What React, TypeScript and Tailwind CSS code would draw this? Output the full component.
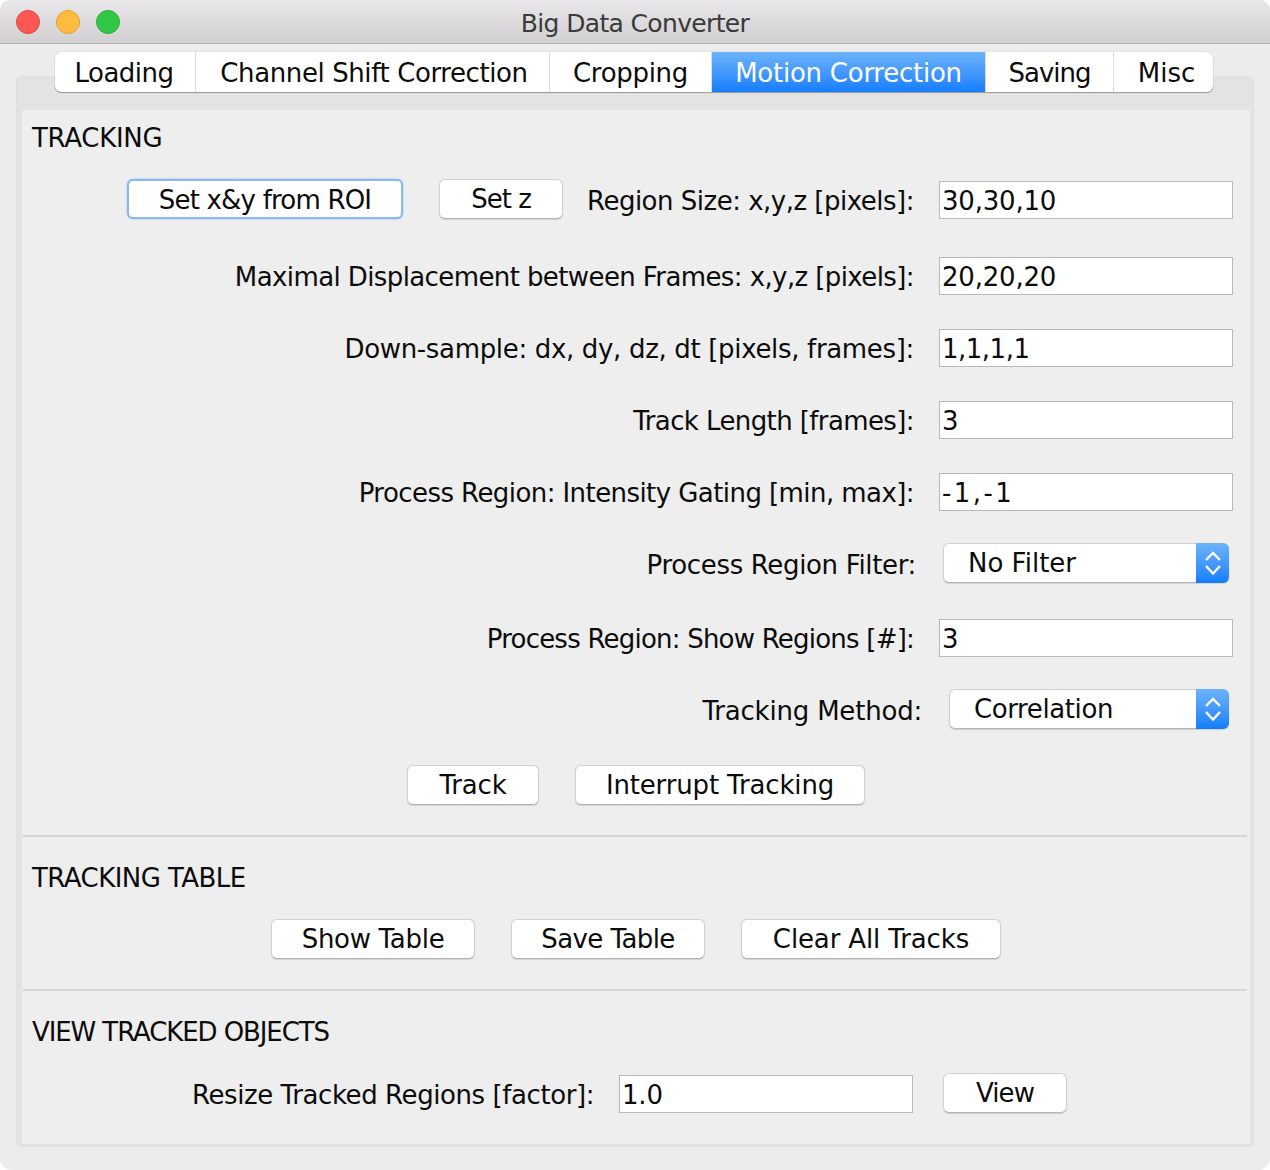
import { ReactNode } from "react";

const Btn = ({ w, label, focus, track = "" }: { w: string; label: string; focus?: boolean; track?: string }) => (
  <button
    className={`${w} ${track} h-[40px] shrink-0 rounded-[6px] bg-white text-center leading-[38px] ${
      focus
        ? "border-2 border-[#8ab8ee] shadow-[0_0_2px_#8ab8ee]"
        : "border border-[#d0d0d0] border-b-[#b4b4b4] shadow-[0_1px_1px_rgba(0,0,0,0.12)]"
    }`}
  >
    {label}
  </button>
);

const Field = ({ value, track = "" }: { value: string; track?: string }) => (
  <div className={`${track} h-[38px] w-[294px] shrink-0 self-end border border-[#b9b9b9] bg-white pl-[2px] leading-[38px]`}>
    {value}
  </div>
);

const Select = ({ w, value, track = "" }: { w: string; value: string; track?: string }) => (
  <div className={`${w} flex h-[40px] shrink-0 rounded-[6px] border border-[#d0d0d0] border-b-[#b4b4b4] bg-white shadow-[0_1px_1px_rgba(0,0,0,0.12)]`}>
    <div className={`${track} flex-1 pl-[24px] leading-[38px]`}>{value}</div>
    <div className="-my-px -mr-px flex w-[33px] items-center justify-center rounded-r-[6px] bg-gradient-to-b from-[#6cb3fa] to-[#0f7dfe]">
      <svg width="18" height="28" viewBox="0 0 18 28" fill="none" stroke="#fff" strokeWidth="2.4">
        <path d="M2 11 9 4 16 11" />
        <path d="M2 17 9 24.5 16 17" />
      </svg>
    </div>
  </div>
);

const Row = ({ mt, h, label, track, children, gap = "ml-[25px]", pr = "pr-[17px]", nudge = "pt-[2px]" }: {
  mt: string;
  h: string;
  label: string;
  track: string;
  children: ReactNode;
  gap?: string;
  pr?: string;
  nudge?: string;
}) => (
  <div className={`${mt} ${h} ${pr} flex items-center justify-end`}>
    <span className={`${track} ${nudge} whitespace-nowrap`}>{label}</span>
    <div className={`${gap} flex h-full items-center`}>{children}</div>
  </div>
);

const Heading = ({ mt = "", text, track }: { mt?: string; text: string; track: string }) => (
  <div className={`${mt} ${track} h-[54px] pl-[10px] leading-[56px]`}>{text}</div>
);

const Divider = () => <div className="mt-[30px] ml-px mr-[3px] h-[2px] bg-[#d6d6d6]" />;

const tabs = [
  { label: "Loading", cls: "w-[141px] rounded-l-[6px] pr-[2px] tracking-[-0.5px]" },
  { label: "Channel Shift Correction", cls: "w-[354px] pl-[3px] tracking-[-0.4px]" },
  { label: "Cropping", cls: "w-[162px] tracking-[-0.3px]" },
  { label: "Motion Correction", cls: "w-[274px] tracking-[-0.25px]", active: true },
  { label: "Saving", cls: "w-[128px] tracking-[-1px]" },
  { label: "Misc", cls: "w-[99px] rounded-r-[6px] pl-[6px] tracking-[0px]" },
];

export default function App() {
  return (
    <div className="h-[1170px] w-[1270px] overflow-hidden bg-white font-['DejaVu_Sans',sans-serif] text-[26px] tracking-[-0.2px] text-[#0c0c0c]">
      <div className="flex h-full flex-col rounded-[12px] bg-[#ececec]">
        <div className="relative flex h-[44px] items-center justify-center rounded-t-[10px] border-b border-[#b1b1b1] bg-gradient-to-b from-[#e9e7e9] to-[#d2d0d2] pt-[5px] text-[25px] tracking-[-0.65px] text-[#3a3a3a]">
          <div className="absolute top-[10px] left-[16px] flex gap-[16px]">
            <span className="h-[24px] w-[24px] rounded-full border border-[#e2463f] bg-[#fc5753]" />
            <span className="h-[24px] w-[24px] rounded-full border border-[#e1a029] bg-[#fdbc40]" />
            <span className="h-[24px] w-[24px] rounded-full border border-[#2aac3a] bg-[#33c748]" />
          </div>
          Big Data Converter
        </div>

        <div className="relative z-10 mt-[8px] ml-[55px] flex h-[40px] w-[1158px] divide-x divide-[#dcdcdc] rounded-[6px] bg-white shadow-[0_0_1px_rgba(0,0,0,0.35),0_1px_1px_rgba(0,0,0,0.3)]">
          {tabs.map((t) => (
            <div
              key={t.label}
              className={`${t.cls} h-full text-center leading-[43px] ${
                t.active ? "bg-gradient-to-b from-[#6cb3fa] to-[#0f7dfe] text-white" : ""
              }`}
            >
              {t.label}
            </div>
          ))}
        </div>

        <div className="mx-[16px] -mt-[16px] h-[1071px] rounded-[6px] border border-[#dfdfdf] bg-[#e3e3e3] pt-[33px] pr-[3px] pb-[2px] pl-[5px]">
          <div className="h-full bg-[#eeeeee]">
            <Heading text="TRACKING" track="tracking-[-0.3px]" />

            <div className="mt-[15px] flex h-[40px] items-center pr-[17px] pl-[105px]">
              <Btn w="w-[276px]" label="Set x&y from ROI" focus track="tracking-[-0.8px]" />
              <div className="ml-[36px]">
                <Btn w="w-[124px]" label="Set z" track="tracking-[-1px]" />
              </div>
              <span className="ml-auto pt-[4px] tracking-[-0.5px] whitespace-nowrap">Region Size: x,y,z [pixels]:</span>
              <div className="ml-[25px] flex h-full">
                <Field value="30,30,10" />
              </div>
            </div>

            <Row mt="mt-[38px]" h="h-[38px]" label="Maximal Displacement between Frames: x,y,z [pixels]:" track="tracking-[-0.6px]">
              <Field value="20,20,20" />
            </Row>
            <Row mt="mt-[34px]" h="h-[38px]" label="Down-sample: dx, dy, dz, dt [pixels, frames]:" track="tracking-[-0.33px]">
              <Field value="1,1,1,1" track="tracking-[-0.5px]" />
            </Row>
            <Row mt="mt-[34px]" h="h-[38px]" label="Track Length [frames]:" track="tracking-[-0.6px]">
              <Field value="3" />
            </Row>
            <Row mt="mt-[34px]" h="h-[38px]" label="Process Region: Intensity Gating [min, max]:" track="tracking-[-0.57px]">
              <Field value="-1,-1" track="tracking-[2.4px]" />
            </Row>
            <Row mt="mt-[32px]" h="h-[40px]" label="Process Region Filter:" track="tracking-[-0.34px]" gap="ml-[27px]" pr="pr-[21px]" nudge="pt-[4px]">
              <Select w="w-[286px]" value="No Filter" track="tracking-[0px]" />
            </Row>
            <Row mt="mt-[36px]" h="h-[38px]" label="Process Region: Show Regions [#]:" track="tracking-[-0.78px]">
              <Field value="3" />
            </Row>
            <Row mt="mt-[32px]" h="h-[40px]" label="Tracking Method:" track="tracking-[-0.2px]" gap="ml-[27px]" pr="pr-[21px]" nudge="pt-[4px]">
              <Select w="w-[280px]" value="Correlation" track="tracking-[-0.4px]" />
            </Row>

            <div className="mt-[36px] flex gap-[36px] pl-[385px]">
              <Btn w="w-[132px]" label="Track" />
              <Btn w="w-[290px]" label="Interrupt Tracking" track="tracking-[-0.15px]" />
            </div>

            <Divider />
            <Heading mt="mt-[13px]" text="TRACKING TABLE" track="tracking-[-0.55px]" />

            <div className="mt-[15px] flex gap-[36px] pl-[249px]">
              <Btn w="w-[204px]" label="Show Table" track="tracking-[-0.3px]" />
              <Btn w="w-[194px]" label="Save Table" track="tracking-[-0.6px]" />
              <Btn w="w-[260px]" label="Clear All Tracks" track="tracking-[-0.13px]" />
            </div>

            <Divider />
            <Heading mt="mt-[13px]" text="VIEW TRACKED OBJECTS" track="tracking-[-1.1px]" />

            <div className="mt-[15px] flex h-[40px] items-center justify-end pr-[183px]">
              <span className="pt-[4px] tracking-[-0.42px] whitespace-nowrap">Resize Tracked Regions [factor]:</span>
              <div className="ml-[25px] flex h-full">
                <Field value="1.0" />
              </div>
              <div className="ml-[30px]">
                <Btn w="w-[124px]" label="View" track="tracking-[-0.95px]" />
              </div>
            </div>
          </div>
        </div>
      </div>
    </div>
  );
}
